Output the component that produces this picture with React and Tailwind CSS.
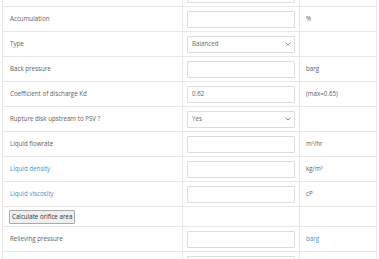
import React from "react";

const Chevron = () => (
  <svg width="6" height="4" viewBox="0 0 6 4" className="shrink-0">
    <path d="M0.7 0.8 L3 3 L5.3 0.8" fill="none" stroke="#666" strokeWidth="0.8" />
  </svg>
);

function Input({ value }) {
  return (
    <div className="h-[17px] w-full border border-[#dcdcdc] rounded-[1px] bg-white flex items-center px-[4px] text-[6.2px] text-[#666]">
      {value}
    </div>
  );
}

function Select({ value }) {
  return (
    <div className="h-[17px] w-full border border-[#dcdcdc] rounded-[1px] bg-white flex items-center justify-between pl-[4px] pr-[3px] text-[6.2px] text-[#666]">
      <span>{value}</span>
      <Chevron />
    </div>
  );
}

function Row({ label, link, field, unit, unitLink, h = "h-[25px]" }) {
  return (
    <div className={`grid grid-cols-[180px_117px_77px] ${h} border-b border-[#e8e8e8]`}>
      <div className={`flex items-center pl-[7px] border-r border-[#e8e8e8] ${link ? "text-[#4a90c8]" : "text-[#606060]"}`}>
        {label}
      </div>
      <div className="flex items-center px-[4px] border-r border-[#e8e8e8]">{field}</div>
      <div className={`flex items-center pl-[6px] ${unitLink ? "text-[#4a90c8]" : "text-[#606060]"}`}>{unit}</div>
    </div>
  );
}

export default function App() {
  return (
    <div className="w-[379px] h-[259px] overflow-hidden bg-white" style={{ fontFamily: '"Open Sans", sans-serif' }}>
      <div className="ml-[2px] w-[375px] border-l border-r border-[#e8e8e8] text-[6.2px] -mt-[18px]">
        <Row label="" field={<Input />} unit="" />
        <Row label="Accumulation" field={<Input />} unit="%" />
        <Row label="Type" field={<Select value="Balanced" />} unit="" />
        <Row label="Back pressure" field={<Input />} unit="barg" />
        <Row label="Coefficient of discharge Kd" field={<Input value="0.62" />} unit="(max=0.65)" />
        <Row label="Rupture disk upstream to PSV ?" field={<Select value="Yes" />} unit="" />
        <Row label="Liquid flowrate" field={<Input />} unit={<span>m<sup className="text-[4px]">3</sup>/hr</span>} />
        <Row label="Liquid density" link field={<Input />} unit={<span>kg/m<sup className="text-[4px]">3</sup></span>} />
        <Row label="Liquid viscosity" link field={<Input />} unit="cP" />
        <div className="grid grid-cols-[180px_117px_77px] h-[20px] border-b border-[#e8e8e8]">
          <div className="flex items-center pl-[6px] border-r border-[#e8e8e8]">
            <div className="h-[14px] px-[2px] flex items-center border border-[#a9a9a9] bg-[#efefef] rounded-[1px] text-[#333]">
              Calculate orifice area
            </div>
          </div>
          <div className="border-r border-[#e8e8e8]"></div>
          <div></div>
        </div>
        <Row label="Relieving pressure" field={<Input />} unit="barg" unitLink />
        <Row label="" field={<Input />} unit="" />
      </div>
    </div>
  );
}
